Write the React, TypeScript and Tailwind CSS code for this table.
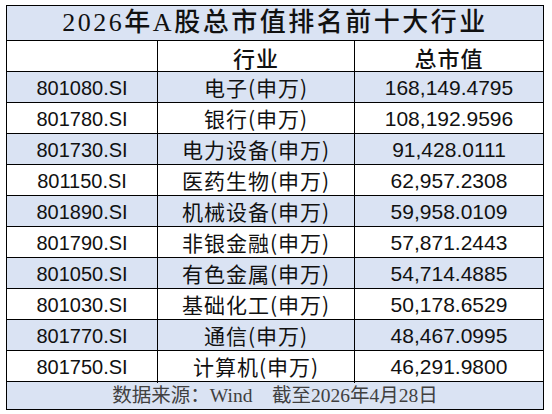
import React from 'react';

interface Row {
  code: string;
  name: string;
  value: string;
}

const rows: Row[] = [
  { code: '801080.SI', name: '电子(申万)', value: '168,149.4795' },
  { code: '801780.SI', name: '银行(申万)', value: '108,192.9596' },
  { code: '801730.SI', name: '电力设备(申万)', value: '91,428.0111' },
  { code: '801150.SI', name: '医药生物(申万)', value: '62,957.2308' },
  { code: '801890.SI', name: '机械设备(申万)', value: '59,958.0109' },
  { code: '801790.SI', name: '非银金融(申万)', value: '57,871.2443' },
  { code: '801050.SI', name: '有色金属(申万)', value: '54,714.4885' },
  { code: '801030.SI', name: '基础化工(申万)', value: '50,178.6529' },
  { code: '801770.SI', name: '通信(申万)', value: '48,467.0995' },
  { code: '801750.SI', name: '计算机(申万)', value: '46,291.9800' },
];

const latin = "font-['Liberation_Sans','Noto_Sans_CJK_SC',sans-serif]";
const cjk = "font-['Noto_Sans_CJK_SC','Liberation_Sans',sans-serif]";
const serif = "font-['Liberation_Serif','Noto_Sans_CJK_SC',serif]";

export default function App() {
  return (
    <div className="w-[552px] h-[414px] bg-white pl-[6px] pt-[5px] text-[#111]">
      <div className="w-[538px] border border-black">
        <div
          className={`h-[34px] bg-[#dae3f3] flex items-center justify-center text-[26px] tracking-[2.5px] font-medium leading-none ${serif}`}
        >
          2026年A股总市值排名前十大行业
        </div>

        <div className="grid grid-cols-[150px_197px_189px] h-[31px] border-t border-black bg-white">
          <div />
          <div className={`border-l border-black flex items-center justify-center text-[22px] font-medium tracking-[1px] ${cjk}`}>
            行业
          </div>
          <div className={`border-l border-black flex items-center justify-center text-[22px] font-medium tracking-[1px] ${cjk}`}>
            总市值
          </div>
        </div>

        {rows.map((r, i) => (
          <div
            key={r.code}
            className={
              'grid grid-cols-[150px_197px_189px] h-[31px] border-t border-black ' +
              (i % 2 === 0 ? 'bg-[#dae3f3]' : 'bg-white')
            }
          >
            <div className={`flex items-center justify-center text-[20px] ${latin}`}>{r.code}</div>
            <div className={`border-l border-black flex items-center justify-center text-[21px] tracking-[1px] ${cjk}`}>
              {r.name}
            </div>
            <div className={`border-l border-black flex items-center justify-center text-[21px] ${latin}`}>
              {r.value}
            </div>
          </div>
        ))}

        <div
          className={`h-[28px] border-t border-black bg-[#dae3f3] flex items-center justify-center text-[19.5px] text-[#404040] whitespace-pre ${serif}`}
        >
          数据来源：Wind　截至2026年4月28日
        </div>
      </div>
    </div>
  );
}
